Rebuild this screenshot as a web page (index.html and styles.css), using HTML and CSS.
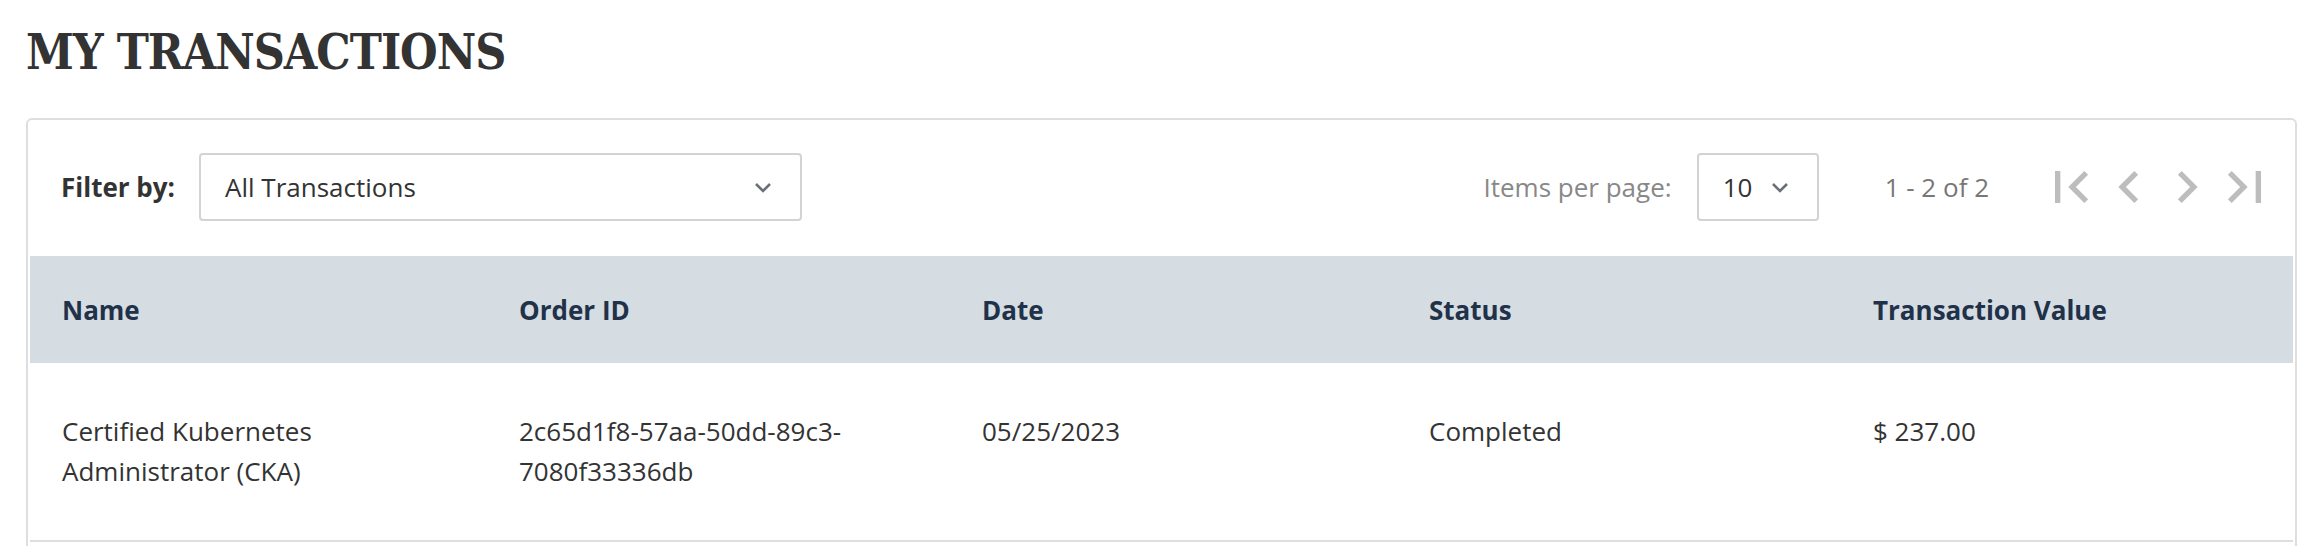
FILE: index.html
```html
<!DOCTYPE html>
<html lang="en">
<head>
    <meta charset="UTF-8">
    <meta name="viewport" content="width=device-width, initial-scale=1.0">
    <title>My Transactions</title>
    <link rel="stylesheet" href="styles.css">
</head>
<body>

    <h1 class="page-title">MY TRANSACTIONS</h1>

    <div class="card">
        <div class="toolbar">
            <div class="filter">
                <label class="filter-label" for="filter">Filter by:</label>
                <div class="select select-wide" id="filter">
                    <span>All Transactions</span>
                    <svg class="caret" width="18" height="11" viewBox="0 0 18 11"><path d="M2 2l7 7 7-7" fill="none" stroke="#6b6f7a" stroke-width="2.6"/></svg>
                </div>
            </div>

            <div class="paginator">
                <span class="page-size-label">Items per page:</span>
                <div class="select select-small">
                    <span>10</span>
                    <svg class="caret" width="18" height="11" viewBox="0 0 18 11"><path d="M2 2l7 7 7-7" fill="none" stroke="#6b6f7a" stroke-width="2.6"/></svg>
                </div>
                <span class="range-label">1 - 2 of 2</span>
                <div class="pager">
                    <button class="pager-btn" title="First page">
                        <svg width="64" height="64" viewBox="0 0 24 24"><path d="M18.41 16.59L13.82 12l4.59-4.59L17 6l-6 6 6 6zM6 6h2v12H6z"/></svg>
                    </button>
                    <button class="pager-btn" title="Previous page">
                        <svg width="64" height="64" viewBox="0 0 24 24"><path d="M15.41 7.41L14 6l-6 6 6 6 1.41-1.41L10.83 12z"/></svg>
                    </button>
                    <button class="pager-btn" title="Next page">
                        <svg width="64" height="64" viewBox="0 0 24 24"><path d="M10 6L8.59 7.41 13.17 12l-4.58 4.59L10 18l6-6z"/></svg>
                    </button>
                    <button class="pager-btn" title="Last page">
                        <svg width="64" height="64" viewBox="0 0 24 24"><path d="M5.59 7.41L10.18 12l-4.59 4.59L7 18l6-6-6-6zM16 6h2v12h-2z"/></svg>
                    </button>
                </div>
            </div>
        </div>

        <table class="transactions">
            <colgroup>
                <col class="col-name">
                <col class="col-order">
                <col class="col-date">
                <col class="col-status">
                <col class="col-value">
            </colgroup>
            <thead>
                <tr>
                    <th>Name</th>
                    <th>Order ID</th>
                    <th>Date</th>
                    <th>Status</th>
                    <th>Transaction Value</th>
                </tr>
            </thead>
            <tbody>
                <tr>
                    <td>Certified Kubernetes Administrator (CKA)</td>
                    <td>2c65d1f8-57aa-50dd-89c3-7080f33336db</td>
                    <td>05/25/2023</td>
                    <td>Completed</td>
                    <td>$ 237.00</td>
                </tr>
            </tbody>
        </table>
    </div>

</body>
</html>
```

FILE: styles.css
```css
body {
    font-family: "Open Sans", Arial, sans-serif;
    font-size: 26px;
    color: #333;
    background: #fff;
    margin: 0;
    padding: 0 15px 0 26px;
}
.page-title {
    font-family: "DejaVu Serif", Georgia, serif;
    font-stretch: condensed;
    font-size: 48px;
    line-height: 56px;
    font-weight: bold;
    letter-spacing: -1px;
    color: #333;
    margin: 24px 0 38px;
}
.card {
    border: 2px solid #dedede;
    border-radius: 6px;
    padding: 0 2px 24px;
}
.toolbar {
    display: flex;
    align-items: center;
    justify-content: space-between;
    padding: 33px 19px 35px 31px;
}
.filter, .paginator {
    display: flex;
    align-items: center;
}
.filter-label {
    font-weight: bold;
    margin-right: 24px;
}
.select {
    display: flex;
    align-items: center;
    justify-content: space-between;
    height: 68px;
    box-sizing: border-box;
    border: 2px solid #d3d3d3;
    border-radius: 4px;
    padding: 0 28px 0 24px;
    color: #333;
}
.select-wide {
    width: 603px;
}
.select-small {
    width: 122px;
}
.caret {
    display: block;
}
.page-size-label {
    color: #888;
    margin-right: 25px;
}
.range-label {
    color: #777;
    margin: 0 53px 0 66px;
}
.pager {
    display: flex;
}
.pager-btn {
    display: flex;
    align-items: center;
    justify-content: center;
    width: 58px;
    height: 64px;
    padding: 0;
    border: none;
    background: none;
    overflow: visible;
}
.pager-btn svg {
    flex: none;
    fill: #bdbdbd;
}
.transactions {
    width: 100%;
    border-collapse: collapse;
    table-layout: fixed;
}
.col-name { width: 457px; }
.col-order { width: 463px; }
.col-date { width: 447px; }
.col-status { width: 444px; }
.col-value { width: 452px; }
.transactions th {
    background-color: #d5dce2;
    color: #1f3249;
    font-weight: bold;
    text-align: left;
    line-height: 40px;
    padding: 34px 32px 33px;
}
.transactions td {
    line-height: 40px;
    padding: 48px 32px 49px;
    border-bottom: 2px solid #dedede;
    vertical-align: top;
}
```
